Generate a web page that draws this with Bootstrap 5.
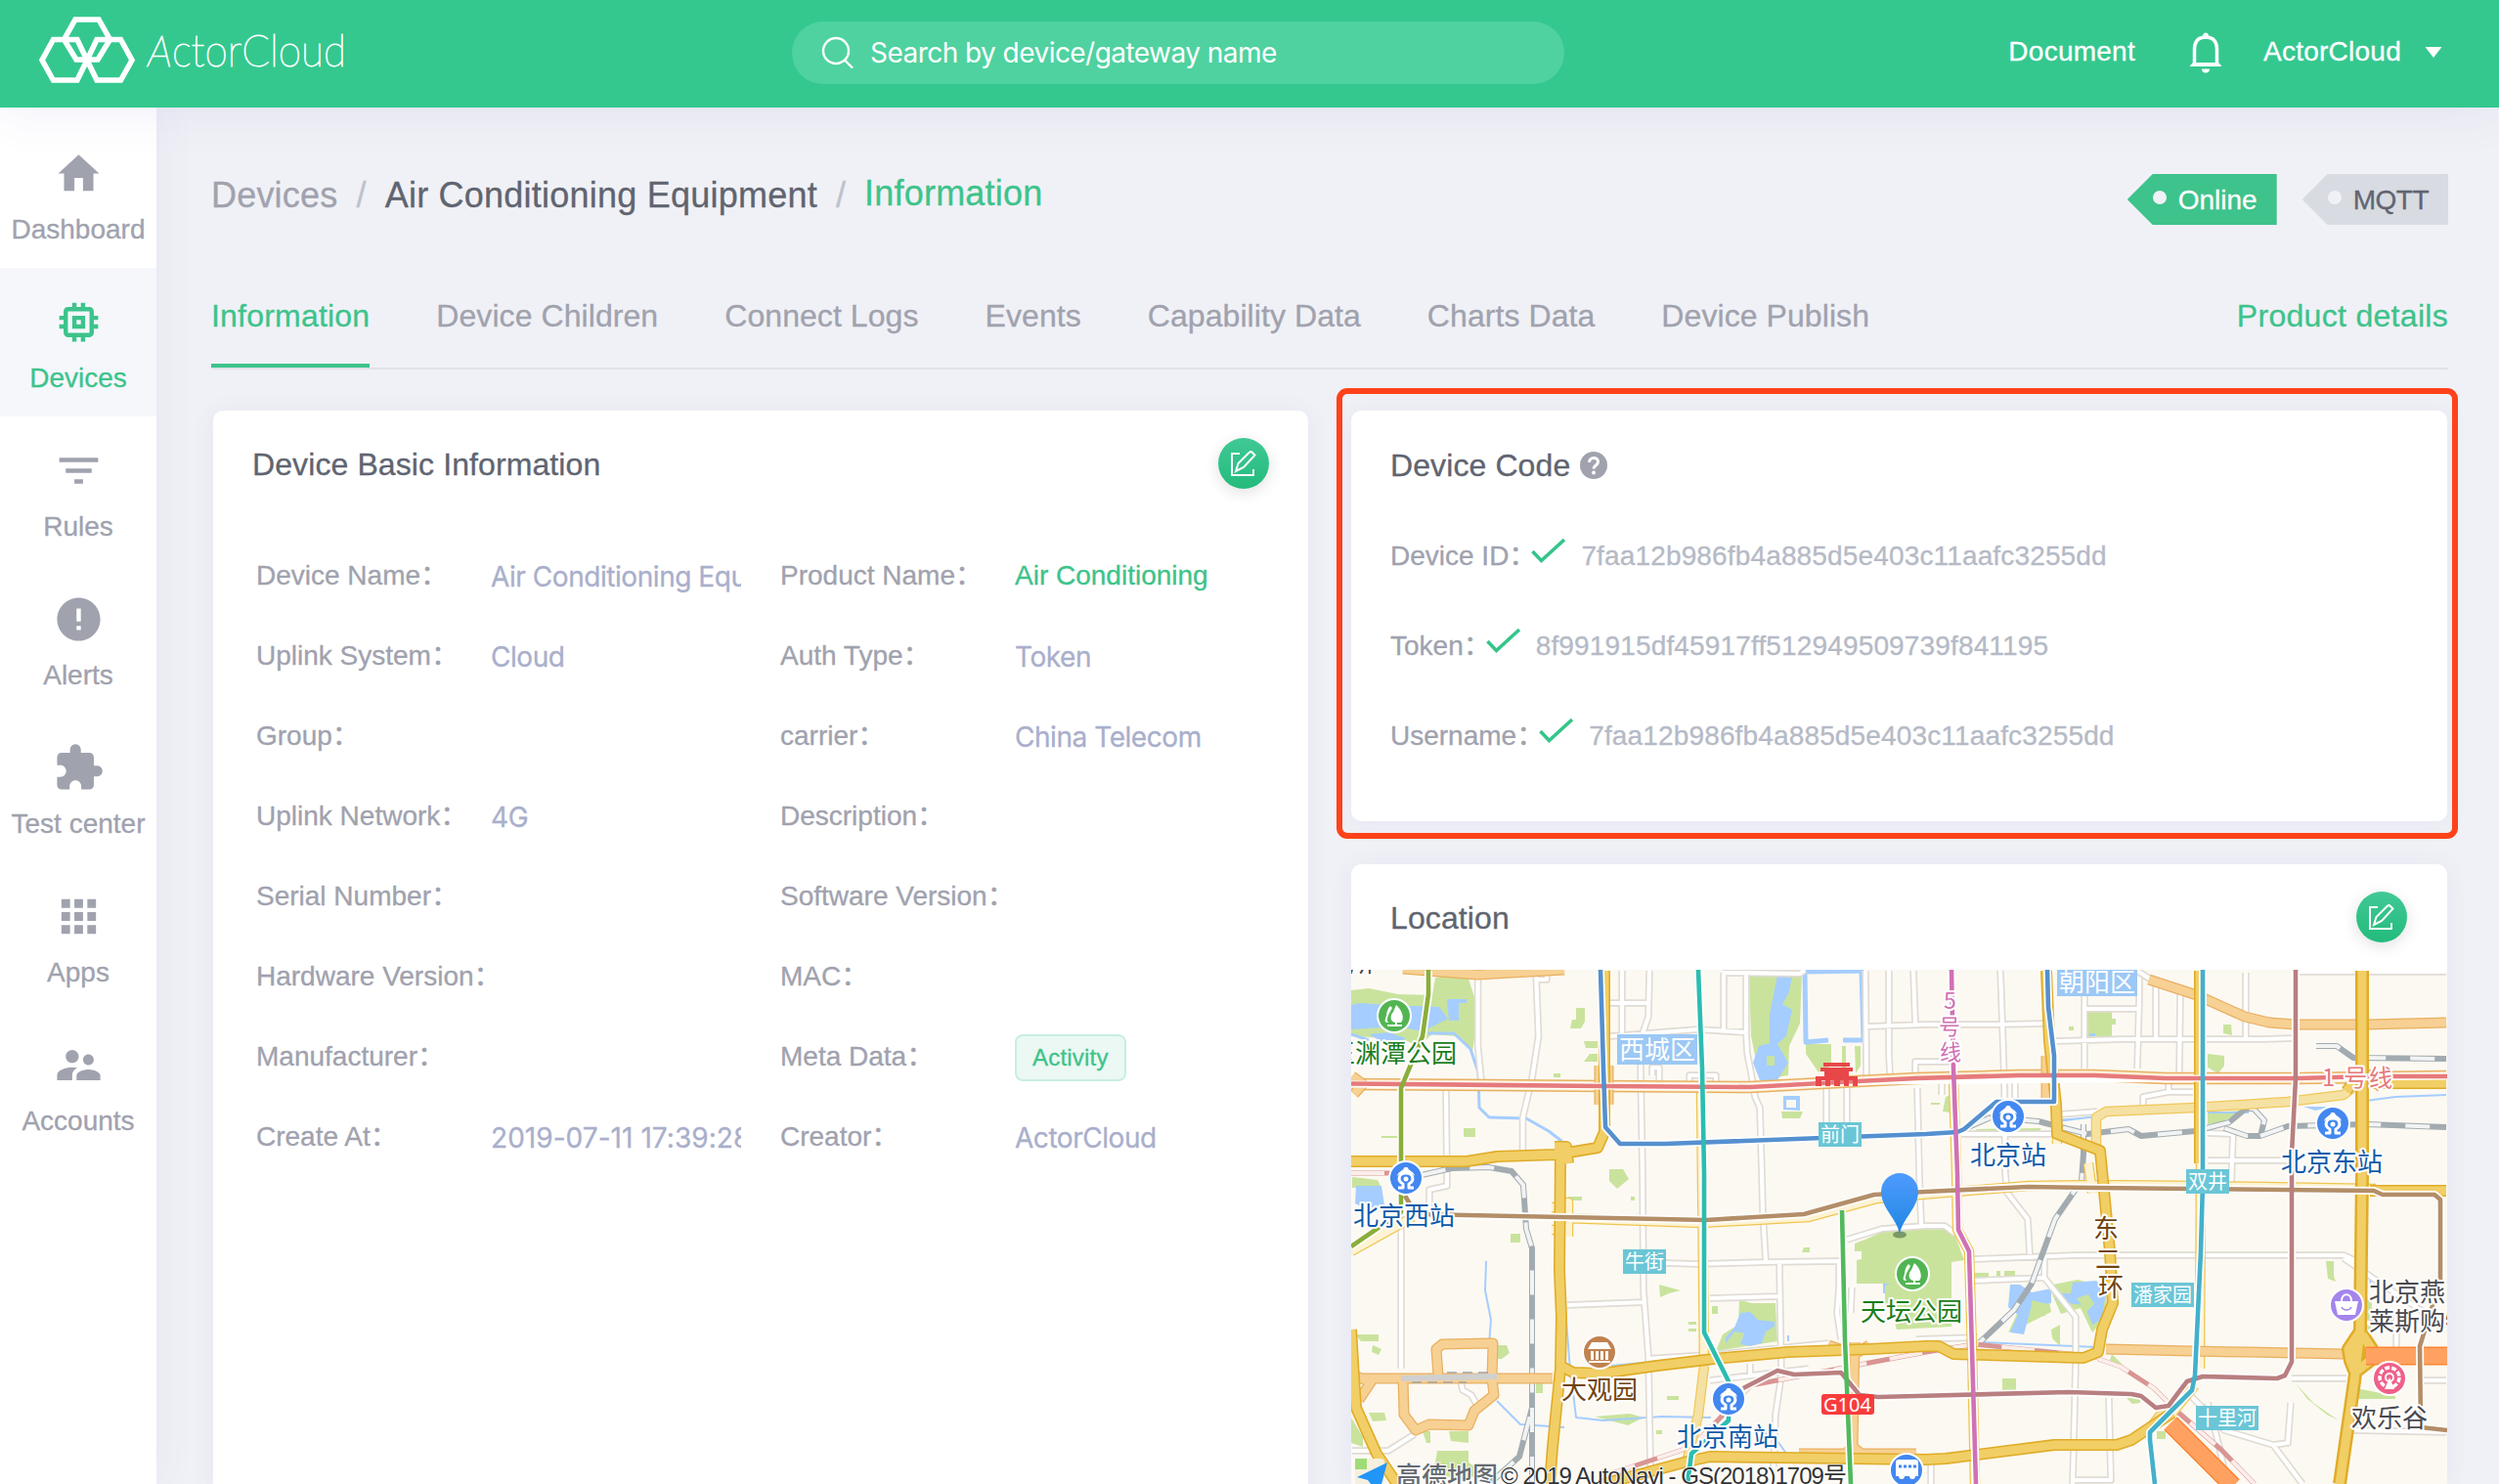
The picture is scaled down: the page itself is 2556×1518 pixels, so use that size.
<!DOCTYPE html>
<html lang="en">
<head>
<meta charset="utf-8">
<title>ActorCloud</title>
<link href="https://cdn.jsdelivr.net/npm/bootstrap@5.3.0/dist/css/bootstrap.min.css" rel="stylesheet">
<style>
body{width:2556px;height:1518px;overflow:hidden;background:#f0f1f6;font:28px/34px "Liberation Sans","Noto Sans CJK SC",sans-serif;color:#a0a2ae;-webkit-text-stroke:.3px}
a{text-decoration:none;color:inherit}
.ac-top{height:110px;background:#34c88f;color:#fff;box-shadow:0 4px 50px rgba(90,80,190,.09);position:relative;z-index:2}
.ac-brand{width:340px;height:80px;margin-left:30px}
.ac-search{width:790px;height:64px;border-radius:32px;background:#4fd2a0;margin-left:440px;padding-left:30px;font-family:Inter,sans-serif;margin-top:-2px;-webkit-text-stroke:0}
.ac-search span{margin-left:16px;letter-spacing:-.54px}
.ac-user{margin-left:auto;padding-right:58px;margin-top:-4px;letter-spacing:.25px}
.ac-bell{margin:2px 42px 0 55px}
.ac-caret{margin-left:24px}
.ac-side{width:160px;height:1408px;background:#fff;padding-top:12px;box-shadow:0 0 40px rgba(90,80,190,.07)}
.ac-side a{height:152px;padding-top:29px;display:flex;flex-direction:column;align-items:center;white-space:nowrap}
.ac-side svg{width:53px;height:53px;fill:currentColor;margin-bottom:14px;flex:none}
.ac-side a.on{background:#f5f7fb;color:#3dc38b}
.ac-main{padding:0 52px 0 56px;height:1408px}
.ac-crumb{height:76px;margin-top:52px;font-size:36px;line-height:44px;padding-top:16px;letter-spacing:.2px}
.ac-crumb i{font-style:normal;color:#bcc2cc;margin:0 19px}
.ac-crumb .ac-last{margin-top:-2px}
.ac-crumb .ac-mid{letter-spacing:.23px}
.ac-dark{color:#606470}
.ac-green{color:#3dc38b}
.ac-tag{height:52px;padding:0 20px 0 52px;line-height:54px;clip-path:polygon(26px 0,100% 0,100% 100%,26px 100%,0 50%);background:#d8dbe2;color:#606470;position:relative;font-size:28px;letter-spacing:-.5px}
.ac-tag::before{content:"";position:absolute;left:26px;top:17px;width:14px;height:14px;border-radius:50%;background:#f0f1f6}
.ac-tag.on{background:#3dc38b;color:#fff;letter-spacing:0}
.ac-tabs{height:90px;margin-top:50px;border-bottom:2px solid #e0e2e8;font-size:32px;line-height:38px;gap:68px;padding-top:16px;white-space:nowrap;letter-spacing:.07px}
.ac-tabs a{height:72px}
.ac-tabs .on{border-bottom:4px solid #3dc38b;color:#3dc38b;letter-spacing:.2px}
.ac-tabs .ac-green{letter-spacing:.3px}
.ac-tabs .on.ac-green{letter-spacing:.2px}
.ac-panel{background:#fff;border-radius:10px;box-shadow:0 2px 24px rgba(90,80,190,.07)}
.ac-title{font-size:32px;line-height:38px;color:#606470;letter-spacing:.1px;padding-top:1px}
.ac-edit{width:52px;height:52px;border-radius:50%;background:linear-gradient(#40c995,#23bb7c);box-shadow:0 4px 16px rgba(0,0,0,.12)}
.ac-row{height:82px}
.ac-row>span{white-space:nowrap;overflow:hidden}
.k1{width:240px}.v1{width:256px}.k2{width:240px;margin-left:40px}
.ac-row .vv{font-family:Inter,"Noto Sans",sans-serif;color:#a9afcb;padding-top:1px;height:40px;letter-spacing:-.45px}
.ac-row .vdate{letter-spacing:.05px}
.ac-chip{border:2px solid #c8efde;background:#ebf8f3;color:#3dc38b;font-size:24px;letter-spacing:.2px;border-radius:8px;height:48px;line-height:44px;padding:0 16px;margin-top:-6px}
.ac-code{height:420px;position:relative;padding:35px 40px}
.ac-code::after{content:"";position:absolute;inset:-23px -11px -18px -15px;border:6px solid #ff421a;border-radius:11px}
.ac-code-head{height:40px;gap:10px;margin-bottom:57px}
.ac-code .ln{height:92px;white-space:nowrap}
.ac-code b{font-weight:400;color:#b5bac6;letter-spacing:.15px}
.ck{margin:-2px 15px 0 -5px;flex:none}
.ac-map{display:block;width:1121px;height:526px;-webkit-text-stroke:0}
.ac-map text{font-family:"Noto Sans CJK SC",sans-serif;font-size:26px}
.ac-map path,.ac-map use{fill:none;stroke-linejoin:round}
.ac-map .halo{paint-order:stroke;stroke:#fff;stroke-width:4px;stroke-linejoin:round;-webkit-text-stroke:4px #fff}
.ac-map .gr{fill:#c9e39d}.ac-map .wa{fill:#a5cdff}.ac-map .wl{stroke:#a5cdff;stroke-width:3}
.ac-map .w{fill:#fff}
.sub{stroke-width:4.6}
</style>
<script src="https://cdn.jsdelivr.net/npm/bootstrap@5.3.0/dist/js/bootstrap.bundle.min.js"></script>
</head>
<body>
<header class="ac-top d-flex align-items-center">
  <svg class="ac-brand" viewBox="30 15 340 80">
    <g fill="none" stroke="#fff" stroke-width="5.600">
      <path d="M77 20h24l11.500 20.500L100 61H78L65.500 40.500z"/>
      <path d="M54.500 40.500h24.500L89 61.500 79 82h-24.500L43 61.500z"/>
      <path d="M99 40.500h24.500L135 61.500 123.500 82H99L89 61.500z"/>
    </g>
    <text x="151" y="68" fill="#fff" font-family="Lato" font-weight="100" font-size="45" textLength="203" lengthAdjust="spacingAndGlyphs" stroke="#fff" stroke-width="1"><tspan font-style="italic">A</tspan>ctorCloud</text>
  </svg>
  <div class="ac-search d-flex align-items-center">
    <svg width="34" height="34" viewBox="0 0 34 34" fill="none" stroke="#fff" stroke-width="2.400"><circle cx="15" cy="15" r="13"/><path d="M24 24.500l8 8"/></svg>
    <span>Search by device/gateway name</span>
  </div>
  <div class="ac-user d-flex align-items-center">
    <a href="#">Document</a>
    <svg class="ac-bell" width="34" height="42" viewBox="0 0 34 42"><path d="M5.500 32V18C5.500 9 10 5 17 5S28.500 9 28.500 18v14" fill="none" stroke="#fff" stroke-width="3.500"/><path d="M14 4a3 3.500 0 016 0v3h-6zM1 35v-1l5-5v2h22v-2l5 5v1zM13 37.500h8a4 4 0 01-8 0z" fill="#fff"/></svg>
    <a href="#">ActorCloud</a>
    <svg class="ac-caret" width="18" height="11" viewBox="0 0 18 11"><path d="M.500 0h17L9 11z" fill="#fff"/></svg>
  </div>
</header>
<div class="d-flex">
<nav class="ac-side flex-shrink-0">
  <a href="#"><svg viewBox="0 0 24 24"><path d="M10 20v-6h4v6h4.800v-8H21.500L12 3.300 2.500 12h2.700v8z"/></svg>Dashboard</a>
  <a href="#" class="on"><svg viewBox="0 0 24 24"><path d="M15 9H9v6h6V9zm-2 4h-2v-2h2v2zm8-2V9h-2V7c0-1.100-.9-2-2-2h-2V3h-2v2h-2V3H9v2H7c-1.100 0-2 .9-2 2v2H3v2h2v2H3v2h2v2c0 1.100.9 2 2 2h2v2h2v-2h2v2h2v-2h2c1.100 0 2-.9 2-2v-2h2v-2h-2v-2h2zm-4 6H7V7h10v10z"/></svg>Devices</a>
  <a href="#"><svg viewBox="0 0 24 24"><path d="M10 18h4v-2h-4v2zM3 6v2h18V6H3zm3 7h12v-2H6v2z"/></svg>Rules</a>
  <a href="#"><svg viewBox="0 0 24 24"><path d="M12 2C6.480 2 2 6.480 2 12s4.480 10 10 10 10-4.480 10-10S17.520 2 12 2zm1 15h-2v-2h2v2zm0-4h-2V7h2v6z"/></svg>Alerts</a>
  <a href="#"><svg viewBox="0 0 24 24"><path d="M20.500 11H19V7c0-1.100-.9-2-2-2h-4V3.500C13 2.120 11.880 1 10.500 1S8 2.120 8 3.500V5H4c-1.100 0-1.990.9-1.990 2v3.800H3.500c1.490 0 2.700 1.210 2.700 2.700s-1.210 2.700-2.700 2.700H2V20c0 1.100.9 2 2 2h3.800v-1.500c0-1.490 1.210-2.700 2.700-2.700 1.490 0 2.700 1.210 2.700 2.700V22H17c1.100 0 2-.9 2-2v-4h1.500c1.380 0 2.500-1.120 2.500-2.500S21.880 11 20.500 11z"/></svg>Test center</a>
  <a href="#"><svg viewBox="0 0 24 24"><path d="M4 8h4V4H4v4zm6 12h4v-4h-4v4zm-6 0h4v-4H4v4zm0-6h4v-4H4v4zm6 0h4v-4h-4v4zm6-10v4h4V4h-4zm-6 4h4V4h-4v4zm6 6h4v-4h-4v4zm0 6h4v-4h-4v4z"/></svg>Apps</a>
  <a href="#"><svg viewBox="0 0 24 24"><path d="M16.500 12c1.380 0 2.490-1.120 2.490-2.500S17.880 7 16.500 7C15.120 7 14 8.120 14 9.500s1.120 2.500 2.500 2.500zM9 11c1.660 0 2.990-1.340 2.990-3S10.660 5 9 5C7.340 5 6 6.340 6 8s1.340 3 3 3zm7.500 3c-1.830 0-5.500.92-5.500 2.750V19h11v-2.250c0-1.830-3.670-2.750-5.500-2.750zM9 13c-2.330 0-7 1.170-7 3.500V19h7v-2.250c0-.85.33-2.340 2.370-3.470C10.500 13.100 9.660 13 9 13z"/></svg>Accounts</a>
</nav>
<main class="ac-main flex-grow-1">
  <div class="ac-crumb d-flex align-items-start">
    <span>Devices</span><i>/</i><span class="ac-dark ac-mid">Air Conditioning Equipment</span><i>/</i><span class="ac-green ac-last">Information</span>
    <div class="d-flex ms-auto" style="gap:26px"><span class="ac-tag on">Online</span><span class="ac-tag">MQTT</span></div>
  </div>
  <div class="ac-tabs d-flex">
    <a href="#" class="on">Information</a><a href="#">Device Children</a><a href="#">Connect Logs</a><a href="#">Events</a><a href="#">Capability Data</a><a href="#">Charts Data</a><a href="#">Device Publish</a>
    <a href="#" class="ac-green ms-auto">Product details</a>
  </div>
  <div class="d-flex align-items-start" style="padding:42px 1px 0 2px;gap:44px">
    <section class="ac-panel flex-shrink-0" style="width:1120px;height:1110px;padding:28px 40px 0">
      <div class="d-flex justify-content-between align-items-center" style="height:52px"><span class="ac-title">Device Basic Information</span>
        <a href="#" class="ac-edit d-flex align-items-center justify-content-center"><svg width="28" height="28" viewBox="0 0 28 28" fill="none" stroke="#fff" stroke-width="2"><path d="M10 4H2v22h22v-6M6 22l2.500-8L20 2.500Q21.500 1.500 23 3l2.500 2.500L14 18z"/></svg></a></div>
      <div style="padding:72px 0 0 4px">
        <div class="ac-row d-flex"><span class="k1">Device Name：</span><span class="v1 vv">Air Conditioning Equipment</span><span class="k2">Product Name：</span><span class="ac-green">Air Conditioning</span></div>
        <div class="ac-row d-flex"><span class="k1">Uplink System：</span><span class="v1 vv">Cloud</span><span class="k2">Auth Type：</span><span class="vv">Token</span></div>
        <div class="ac-row d-flex"><span class="k1">Group：</span><span class="v1 vv"></span><span class="k2">carrier：</span><span class="vv">China Telecom</span></div>
        <div class="ac-row d-flex"><span class="k1">Uplink Network：</span><span class="v1 vv">4G</span><span class="k2">Description：</span></div>
        <div class="ac-row d-flex"><span class="k1">Serial Number：</span><span class="v1 vv"></span><span class="k2">Software Version：</span></div>
        <div class="ac-row d-flex"><span class="k1 overflow-visible">Hardware Version：</span><span class="v1 vv"></span><span class="k2">MAC：</span></div>
        <div class="ac-row d-flex"><span class="k1">Manufacturer：</span><span class="v1 vv"></span><span class="k2">Meta Data：</span><span class="ac-chip">Activity</span></div>
        <div class="ac-row d-flex"><span class="k1">Create At：</span><span class="v1 vv vdate">2019-07-11 17:39:28</span><span class="k2">Creator：</span><span class="vv">ActorCloud</span></div>
      </div>
    </section>
    <div class="d-flex flex-column" style="width:1121px;gap:44px">
      <section class="ac-panel ac-code">
        <div class="d-flex align-items-center ac-title ac-code-head"><span>Device Code</span><svg width="28" height="28" viewBox="0 0 28 28"><circle cx="14" cy="14" r="14" fill="#a0a2ae"/><path d="M9.500 11c0-6 9-6 9-.5 0 3.500-4.500 3.500-4.500 7" fill="none" stroke="#fff" stroke-width="3"/><circle cx="14" cy="21.500" r="2" fill="#fff"/></svg></div>
        <div class="ln d-flex"><span>Device ID：</span><svg class="ck" width="36" height="27" viewBox="0 0 36 27"><path d="M1.500 14l9 9.500L34 2" fill="none" stroke="#34c58a" stroke-width="3.600"/></svg><b>7faa12b986fb4a885d5e403c11aafc3255dd</b></div>
        <div class="ln d-flex"><span>Token：</span><svg class="ck" width="36" height="27" viewBox="0 0 36 27"><path d="M1.500 14l9 9.500L34 2" fill="none" stroke="#34c58a" stroke-width="3.600"/></svg><b>8f991915df45917ff512949509739f841195</b></div>
        <div class="ln d-flex"><span>Username：</span><svg class="ck" width="36" height="27" viewBox="0 0 36 27"><path d="M1.500 14l9 9.500L34 2" fill="none" stroke="#34c58a" stroke-width="3.600"/></svg><b>7faa12b986fb4a885d5e403c11aafc3255dd</b></div>
      </section>
      <section class="ac-panel">
        <div class="d-flex justify-content-between align-items-center" style="height:108px;padding:0 41px 0 40px"><span class="ac-title">Location</span>
          <a href="#" class="ac-edit d-flex align-items-center justify-content-center"><svg width="28" height="28" viewBox="0 0 28 28" fill="none" stroke="#fff" stroke-width="2"><path d="M10 4H2v22h22v-6M6 22l2.500-8L20 2.500Q21.500 1.500 23 3l2.500 2.500L14 18z"/></svg></a></div>
        <svg class="ac-map" viewBox="1382 992 1121 526">
          <defs>
            <linearGradient id="pin" x1="0" y1="0" x2="0" y2="1"><stop offset="0" stop-color="#4f9bff"/><stop offset="1" stop-color="#1f86e0"/></linearGradient>
            <path id="minor" d="M1511.600 993V1070L1515 1105M1571 993L1573.600 1060 1567 1103 1557.500 1143V1178M1571 1002H1582V993M1479 1115L1480 1213 1462 1217V1240M1659 993V1057M1645 1026H1686M1687 993L1686 1040 1679 1060 1678 1093 1680 1200 1681 1320 1686 1387 1688 1500M1647 1060L1737 1053 1785 1056M1763 995V1053M1762 995L1841 996 1846 992M1786 995V1057L1787 1077 1793 1108 1795 1122 1800 1133 1802 1200 1803 1240 1806 1290M1908 993L1909 1100M1910 1050L1970 1048 2040 1048 2091 1047M1932 993V1075L1933 1100M1957 993L1959 1047M1996 1086H1959V1100M1868 1113V1150M1889 1113V1150M1961 1113L1963 1200 1965 1253M1433 1250V1400M1603 1335L1682 1332M1703 1292L1737 1293 1806 1291 1881 1290M1749 1328L1820 1326M1820 1292L1822 1407 1816 1447 1814 1500M1684 1390L1760 1385 1870 1374M1881 1290V1317L1879 1343 1883 1370M1894 1317L1893 1343M1889 1268L1925 1257 1970 1254 1989 1254 2000 1262M1383 1484H1420L1447 1467M1494 1413L1496 1422 1505 1427 1512 1440M1749 1412L1850 1400M2046 993L2048 1047 2050 1107 2051 1200 2053 1220 2074 1247 2076 1283M2132 1017V1093M2132 1032H2186M2188 1000V1022L2186 1093M2186 993L2200 1002M2205 1000V1063M2230 1017L2229 1097M2103 1065L2170 1063 2313 1063 2346 1062M2297 995V1062M2348 994H2502M2061 1107V1127M1986 1107V1120M2105 1140L2145 1137M2192 1135V1122L2218 1117 2218 1108M2218 1117H2243M2258 1159L2284 1160 2282 1215M2006 1160H2100M2258 1187H2343M2019 1288L2123 1284 2397 1284 2410 1290M2397 1287L2480 1343 2500 1352M2019 1310L2091 1307M2091 1287V1307L2123 1347V1393L2120 1518M2120 1514H2159L2157 1430M2344 1410H2400M2241 1428L2275 1463 2325 1478 2355 1518M2325 1478L2340 1476 2343 1435M2258 1435L2270 1480 2278 1518M2405 1463L2502 1465M2451 1345V1378M2420 1353H2450M1960 1370L2023 1368M2479 1412H2502M1975 1490V1518M1728 1108V1100H1755V1115M1690 1100V1092H1697V1105M1790 1395V1410"/>
            <path id="tan" d="M1435 991L1511 997 1600 992M2198 1002L2247 1018 2296 1040 2321 1046 2348 1048 2420 1048 2502 1046M2154 1380L2241 1382 2397 1385M1389 1410H1588M1471 1407L1469 1380 1475 1375 1527 1374 1526 1410 1528 1427 1508 1443 1502 1458 1462 1457 1448 1463 1436 1447 1435 1410M1388 1408L1402 1414 1390 1432M1870 1376L1897 1385 1912 1376M1897 1373L1895 1480 1884 1490M1895 1480L1908 1490M1840 1487H1960M1383 1101L1394 1109 1385 1119M2093 1080V1130M2250 1085V1120M1636 1090V1130M1645 1090V1130"/>
            <path id="hwy" d="M1382 1109L1640 1111 1790 1112 1900 1106 1960 1103 2065 1100 2142 1100 2215 1103 2350 1103 2502 1101"/>
            <path id="thin" d="M1740 1115L1743 1397M1600 1246L1740 1251 1850 1245 1920 1226 1965 1222 2074 1213 2142 1212 2250 1213 2430 1216M1382 1280L1445 1245M1594 1230H1604V1265M1587 1235H1594M1587 1258H1594M1998 1105L2001 1200 2002 1258 2014 1280 2017 1380 2020 1518M2251 1190L2250 1400M2104 1150V1170M2140 1220L2136 1190M2222 1445L2245 1417"/>
            <path id="light" d="M2144 1175V1143L2154 1137 2245 1133 2340 1127 2397 1120 2412 1108M1743 1397L1737 1447 1726 1492M2200 1460L2215 1440"/>
            <path id="trunk" d="M1382 1188H1500L1531 1183 1592 1181 1634 1174 1641 1158V993M1596 1182L1595 1300 1597 1347 1596 1400 1588 1480 1585 1518M1590 1173H1602L1604 1190M1596 1397L1609 1404 1638 1405 1695 1397 1753 1390 1829 1383 1913 1380 1970 1377 1983 1377 1998 1385 2131 1389 2146 1383 2150 1360 2161 1333 2158 1280 2148 1177 2104 1160 2103 1130 2096 1065 2093 993M1382 1360L1385 1410 1387 1440 1408 1487 1429 1518M1640 1518L1726 1495 1749 1490 1970 1493 1990 1492 2101 1478 2165 1478 2180 1473 2222 1445M2250 993V1190M2412 1100L2400 1116M2420 1098L2436 1112M2424 1218H2502M2424 1108H2502"/>
            <path id="ring4" d="M2416 993V1200L2414 1360 2408 1413 2393 1518M2414 1362L2402 1380 2404 1392 2408 1402M2416 1365L2426 1380 2424 1392 2411 1402"/>
            <path id="rail" d="M1454 1202L1485 1195 1523 1194 1546 1198 1558 1212 1561 1257 1567 1277V1440L1554 1490 1523 1518M1567 1440V1518M2013 1153L2036 1143 2085 1147 2135 1160 2177 1155 2190 1162 2245 1157 2280 1148 2297 1134H2305L2316 1146 2312 1162H2298L2275 1154M2312 1162L2340 1152 2420 1150 2502 1153M2369 1070H2390L2407 1082 2502 1083M2131 1150V1180L2129 1208 2102 1247 2078 1313 2060 1340 2025 1373"/>
            <path id="prail" d="M2146 1390L2169 1398 2203 1420 2226 1443 2272 1483 2306 1518M1730 1480L1753 1457 1791 1417 1970 1383 2020 1375 2145 1388M1640 1510L1730 1480M1382 1200H1440"/>
          </defs>
          <rect x="1382" y="992" width="1121" height="526" fill="#fcf9f2"/>
          <path class="gr" d="M1382 1013L1400 1011 1430 1017 1465 1018 1468 1000 1500 995 1508 1020 1509 1057 1506 1075 1490 1060 1465 1058 1450 1070 1435 1063 1382 1060zM1789 997H1843L1841 1047 1830 1070 1829 1100 1800 1105 1791 1060zM1612 1031H1621V1045L1617 1052H1606L1608 1043H1612zM1620 1065H1634V1072H1622zM1626 1078H1634V1086H1620zM1497 1154h12v9h-12zM1589 1098h7v4h-7zM1847 1068H1873V1090L1860 1097 1847 1078zM1884 1070h4v25h-4zM1897 1070h6v20l-5 8zM1822 1137h22l-3 7h-18zM1413 1162h16v2h-16zM1646 1196h14l6 10-12 10-8-8zM1383 1204l26 3 4 8-30 0zM1545 1262h10v9h-10zM1531 1376h10l3 8-8 6h-5zM1386 1365h24v7h-18zM1404 1376l9 4-3 6-7-3zM1697 1314l22 6-12 3-9 4zM1604 1224h14v4h-14zM1668 1224h4v4h-4zM1897 1272L1910 1267 1930 1258 1997 1257 2009 1289 1996 1291V1357L1940 1360 1934 1340 1928 1335V1313L1899 1313V1289L1904 1288V1280H1897zM1779 1330L1792 1333 1816 1333 1818 1372 1755 1382 1762 1365 1778 1355zM1751 1336h6v8h-6zM1727 1352h8v3h-8zM1727 1359h8v3h-8zM1845 1276h6v5h-8zM1400 1445h16l2 8-14 1zM1455 1464h8v12h-4zM1482 1464h20v12l-18-2zM1470 1484h32v12l12 8-12 10-36-6zM1571 1413h7v12h-7zM1631 1449l36-3 14 4-16 8zM1694 1463h6v4h-6zM1705 1428h12v4h-12zM2134 1035h26v7h4v6h-4v13h-26zM2116 1050h5v4h-5zM2274 1048h8l1 11-9-2zM2258 1078l17 2v10l-6 8-11-6zM2258 1138l35-2-20 12-15 2zM2022 1155l66-1-4 4-68 2zM1990 1122l5-2v18l-8-1zM1975 1128h9v2h-9zM2095 1315l30-6 30 8-1 30-14 16-12-25-20 6zM2072 1325l22-5 4 22-30 15-14 6zM2098 1360l9-5v22l-8-8zM2020 1302h14v5h-14zM2042 1300h4v6h-4zM2050 1300h11v6h-11zM2048 1410h14v12h-14zM2160 1385l12 12-6 2-8-8zM2175 1430l14 0 0 5-8 1zM2206 1464h9v8h-9zM2379 1290h8v15l2 6-8-3zM2420 1325l6 8-2 40 12 10-14-5zM2410 1420l40 8v3h-38zM2348 1415l18 20 26 18-12-6-20-16zM1382 1450l12 20 0 10-12-4z"/>
          <path class="wa" d="M1382 1028L1390 1026 1420 1028 1472 1030 1481 1042 1455 1055 1430 1050 1382 1053zM1480 1022h20v4h-8v18h-10zM1400 1058l20-2 18 6-14 10zM1818 998L1833 1000 1829 1017 1823 1027 1833 1033 1827 1060 1818 1068 1829 1087 1818 1105H1800L1793 1087 1799 1070 1810 1067V1037zM1824 1121h17v15l-17-1zM1387 1213h26l3 20-14 6-16-8zM1780 1343L1790 1342 1798 1350 1815 1352V1357L1806 1362 1802 1374 1790 1377 1780 1375 1784 1364 1774 1362 1765 1374V1368L1774 1358zM2056 1314h10l12 8 20-4v15l-20 2-8 30-14-2 8-18-10-8zM2120 1312l24-2 10 10-4 30-10 5-8-20-18-2-12-4 4-6h12zM2137 1057h6v3h-6zM2103 1145l40-3-36 5zM2356 1132l30 0-18 4zM1926 1313h8l-6 2v8h-2zM1828 1366h2v6h-2zM2422 1303l8 4-6 6z"/>
          <path class="gr" d="M1807 1080h8v10h-8zM2078 1330l16 4-2 12-14 2zM2124 1328l12-4 6 10-8 8z"/>
          <rect x="1827" y="1125" width="10" height="8" fill="#fcf9f2"/>
          <path class="wl" d="M1382 1058L1400 1064M1460 1057H1487L1504 1073 1512 1097 1513 1133 1523 1143 1561 1144 1584 1157 1597 1167V1178"/>
          <path stroke="#a5cdff" stroke-width="2" d="M1520 1290L1519 1320 1525 1350 1523 1375M1602 1350L1605 1390 1612 1450 1640 1453 1700 1449 1750 1450M1648 1397L1690 1393M1531 1433L1555 1457 1600 1460M1790 1460L1815 1470 1833 1495M2025 1373L2145 1378M2420 1126L2450 1122 2502 1120M2104 1147L2145 1142M2258 1138H2300"/>
          <path stroke="#a5cdff" stroke-width="5" d="M1870 1064L1847 1066 1846 994 1904 993 1906 1064 1885 1064"/>
          <use href="#minor" stroke="#e0dbd4" stroke-width="7.500"/><use href="#minor" stroke="#fff" stroke-width="4.200"/>
          <use href="#rail" stroke="#a2abb0" stroke-width="6"/><use href="#rail" stroke="#f2f3f3" stroke-width="4" stroke-dasharray="25 25"/>
          <use href="#prail" stroke="#d89593" stroke-width="5"/><use href="#prail" stroke="#fbeeea" stroke-width="4" stroke-dasharray="34 24"/>
          <use href="#thin" stroke="#efc550" stroke-width="10.500"/><use href="#thin" stroke="#fdf3d4" stroke-width="8"/>
          <use href="#hwy" stroke="#e8b060" stroke-width="12.500"/><use href="#hwy" stroke="#fdf0d8" stroke-width="9.500"/>
          <use href="#tan" stroke="#e8b060" stroke-width="11"/><use href="#tan" stroke="#f7d093" stroke-width="8.500"/>
          <use href="#light" stroke="#f0c85a" stroke-width="10.500"/><use href="#light" stroke="#f5e1a3" stroke-width="8"/>
          <use href="#trunk" stroke="#e0ac28" stroke-width="12"/><use href="#trunk" stroke="#f1cf66" stroke-width="8.800"/>
          <use href="#ring4" stroke="#e0ac28" stroke-width="14"/><use href="#ring4" stroke="#f1cf66" stroke-width="9"/>
          <path stroke="#fb8534" stroke-width="19" d="M2420 1387H2503M2220 1456L2284 1520"/><path stroke="#ffa261" stroke-width="16" d="M2420 1387H2503M2220 1456L2284 1520"/>
          <path stroke="#d0d0d0" stroke-width="6" d="M1433 1410L1531 1408"/><path stroke="#a2a2a2" stroke-width="1.500" stroke-dasharray="10 6" d="M1444 1414H1500M1480 1404H1525"/>
          <g id="lines">
            <path stroke="#fff" stroke-width="8" d="M1461 993V1017L1455 1060 1433 1113V1240L1382 1275M1637 993L1640 1093 1642 1153 1657 1170H1703L1970 1160 2002 1158 2009 1155 2042 1127H2101V1080L2095 1030 2094 993M1737 993L1741 1093 1743 1200V1363L1768 1413V1453L1730 1487 1726 1518M1996 993L1998 1093 2002 1200 2003 1258 2014 1280 2017 1380 2021 1518M2253 993V1210L2251 1280 2245 1407 2242 1422 2199 1465V1473L2204 1518M2348 993V1103L2344 1180V1393L2337 1407 2329 1410 2253 1408 2237 1413 2230 1422 2218 1438 2205 1440 2190 1428 2180 1426 2116 1424 1960 1428 1921 1429 1902 1427 1883 1404 1835 1406 1818 1402 1783 1420M1437 1223L1448 1242 1699 1247 1745 1248 1845 1242 1917 1222 1970 1219 2074 1214 2142 1215 2428 1218 2437 1222H2490L2496 1227V1310L2475 1377 2476 1460 2502 1463M1884 1238L1887 1370 1893 1518"/>
            <path stroke="#fff" stroke-width="7" d="M1382 1109L1640 1111 1790 1112 1900 1106 2502 1101"/>
            <path class="sub" stroke="#e67a7c" d="M1382 1108.500L1640 1111 1790 1112 1900 1106 1960 1103 2065 1100 2142 1100 2215 1103 2350 1103 2425 1101H2503"/>
            <path class="sub" stroke="#b38e68" d="M1437 1223L1448 1242 1699 1247 1745 1248 1845 1242 1917 1222 1970 1219 2074 1214 2142 1215 2428 1218 2437 1222H2490L2496 1227V1310L2475 1377 2476 1460 2503 1463"/>
            <path class="sub" stroke="#8aae3a" d="M1461 992V1017L1455 1060 1433 1113V1240L1382 1275"/>
            <path class="sub" stroke="#5590cf" d="M1637 992L1640 1093 1642 1153 1657 1170H1703L1970 1160 2002 1158 2009 1155 2042 1127H2101V1080L2095 1030 2094 992"/>
            <path class="sub" stroke="#2bbdb0" d="M1737 992L1741 1093 1743 1200V1363L1768 1413V1453L1730 1487 1726 1518"/>
            <path class="sub" stroke="#b97f80" d="M2348 992V1103L2344 1180V1393L2337 1407 2329 1410 2253 1408 2237 1413 2230 1422 2218 1438 2205 1440 2190 1428 2180 1426 2116 1424 1960 1428 1921 1429 1902 1427 1883 1404 1835 1406 1818 1402 1783 1420"/>
            <path class="sub" stroke="#cf72b4" d="M1996 992L1998 1093 2002 1200 2003 1258 2014 1280 2017 1380 2021 1518"/>
            <path class="sub" stroke="#44b0ca" d="M2253 992V1210L2251 1280 2245 1407 2242 1422 2199 1465V1473L2204 1518"/>
            <path class="sub" stroke="#52b95c" d="M1884 1238L1887 1370 1893 1518"/>
          </g>
          <g><rect x="1654" y="1058" width="82" height="31" fill="#9cc8f5"/><rect x="2104" y="988" width="82" height="31" fill="#9cc8f5"/>
          <text class="w" x="1656" y="1083">西城区</text><text class="w" x="2106" y="1014">朝阳区</text></g>
          <g fill="#6ac6d6"><rect x="1860" y="1148" width="44" height="25"/><rect x="1660" y="1278" width="44" height="25"/><rect x="2236" y="1196" width="44" height="25"/><rect x="2180" y="1312" width="64" height="25"/><rect x="2246" y="1438" width="64" height="25"/></g>
          <g fill="#fff"><text style="font-size:20px" x="1862" y="1168">前门</text><text style="font-size:20px" x="1662" y="1298">牛街</text><text style="font-size:20px" x="2238" y="1216">双井</text><text style="font-size:20px" x="2182" y="1332">潘家园</text><text style="font-size:20px" x="2248" y="1458">十里河</text></g>
          <g transform="translate(1857 1087)" fill="#e8474a"><rect x="8" y="0" width="27" height="4"/><rect x="5" y="5" width="33" height="4"/><rect x="9" y="8" width="25" height="6"/><path style="fill:#e8474a" d="M0 14h43v10h-5v-6h-4v6h-5v-6h-4v6h-6v-6h-4v6h-5v-6H6v6H0z"/></g>
          <g id="pois" stroke="#fff" stroke-width="2">
            <circle cx="1426" cy="1039" r="17" fill="#52b552"/><circle cx="1956" cy="1303" r="17" fill="#52b552"/>
            <circle cx="1438" cy="1205" r="17" fill="#4387f0"/><circle cx="2054" cy="1142" r="17" fill="#4387f0"/><circle cx="2386" cy="1149" r="17" fill="#4387f0"/><circle cx="1768" cy="1431" r="17" fill="#4387f0"/><circle cx="1950" cy="1504" r="17" fill="#4387f0"/>
            <circle cx="1636" cy="1383" r="17" fill="#c0824f"/><circle cx="2400" cy="1335" r="17" fill="#a485ec"/><circle cx="2444" cy="1410" r="17" fill="#f0608a"/>
          </g>
          <defs><g id="tree"><path style="fill:#fff" d="M2-11c6 5 9 14 5 18H3v2h5v2H-7V9h8V7c-6-1-5-8-2-11zM-4-10c-5 6-3 9-5 13-1 3 0 4 3 4-3-4 1-9 4-15z"/></g>
          <g id="stn"><path style="stroke:#fff;stroke-width:3" d="M-8 9h5v-4c-6-3-5-11 3-11s9 8 3 11v4h5"/><path style="fill:#fff" d="M-9-3C-8-8-3-8-1.500-12h3C3-8 8-8 9-3 4-8-4-8-9-3z"/><circle cy="0" r="2.500" fill="#fff"/></g></defs>
          <use href="#tree" x="1426" y="1039"/><use href="#tree" x="1956" y="1303"/>
          <use href="#stn" x="1438" y="1206"/><use href="#stn" x="2054" y="1143"/><use href="#stn" x="2386" y="1150"/><use href="#stn" x="1768" y="1432"/>
          <path style="fill:#fff" d="M1628 1373h16l4 7h-24zM1627 1382h3v9h-3zM1632 1382h3v9h-3zM1637 1382h3v9h-3zM1642 1382h3v9h-3zM1625 1392h22v2h-22z"/>
          <path style="fill:#fff" d="M2388 1331h24l-3 14h-18z"/><path style="stroke:#fff;stroke-width:2" d="M2395 1331c0-9 10-9 10 0"/><path style="stroke:#a485ec;stroke-width:1.500" d="M2395 1337c2 4 8 4 10 0"/>
          <circle cx="2444" cy="1409" r="10" fill="none" stroke="#fff" stroke-width="3.500" stroke-dasharray="5 2"/><circle cx="2444" cy="1409" r="4" fill="none" stroke="#fff" stroke-width="2"/><path style="fill:#fff" d="M2444 1409l5 12h-10z"/>
          <path style="fill:#fff" d="M1939 1496q0-3 3-3h17q3 0 3 3v14h-3a3 3 0 01-6 0h-5a3 3 0 01-6 0h-3z"/><path style="stroke:#4387f0;stroke-width:3" stroke-dasharray="3 2" d="M1942 1500h18"/>
          <g fill="#0f5aa8"><text class="halo" x="1384" y="1253">北京西站</text><text class="halo" x="2015" y="1191">北京站</text><text class="halo" x="2333" y="1198">北京东站</text><text class="halo" x="1715" y="1479">北京南站</text></g>
          <g fill="#1b7d1b"><text class="halo" x="1360" y="1087">玉渊潭公园</text><text class="halo" x="1903" y="1351">天坛公园</text></g>
          <g fill="#70430f"><text class="halo" x="1597" y="1431">大观园</text><text class="halo" x="2141" y="1266">东</text><text class="halo" x="2143" y="1297">二</text><text class="halo" x="2146" y="1326">环</text></g>
          <g fill="#cf72b4"><text class="halo" style="font-size:23px" x="1988" y="1032">5</text><text class="halo" style="font-size:22px" x="1983" y="1058">号</text><text class="halo" style="font-size:22px" x="1984" y="1084">线</text></g>
          <text class="halo" style="font-size:24px" fill="#e67a7c" x="2375" y="1111" textLength="72">1 号线</text>
          <g fill="#4a4a4f"><text class="halo" x="2423" y="1331">北京燕</text><text class="halo" x="2423" y="1361">莱斯购物</text><text class="halo" x="2405" y="1460">欢乐谷</text><text class="halo" x="1380" y="994">所</text></g>
          <rect x="1863" y="1426" width="54" height="21" rx="3" fill="#f83c3c"/><text class="w" style="font:20px 'Noto Sans'" x="1865" y="1444">G104</text>
          <ellipse cx="1943" cy="1263" rx="7" ry="3.500" fill="#5a7a50" opacity=".7"/>
          <path style="fill:url(#pin)" d="M1943 1263C1941 1247 1924 1236 1924 1219a19 19 0 0138 0C1962 1236 1945 1247 1943 1263z"/>
          <rect x="1386" y="1492" width="30" height="30" rx="4" fill="#f5efdf"/><path style="fill:#9fdc78" d="M1386 1492h12v11h-12z"/><path style="fill:#2196f8" d="M1419 1496L1388 1511 1399 1514 1402 1518H1413z"/>
          <text style="font-weight:500;paint-order:stroke;stroke:#fff;stroke-width:2px" fill="#666b70" x="1428" y="1519">高德地图</text>
          <text style="font-family:'Liberation Sans','Noto Sans CJK SC';font-size:24px;paint-order:stroke;stroke:#fff;stroke-width:1.500px" fill="#333" x="1535" y="1518" textLength="354">© 2019 AutoNavi - GS(2018)1709号</text>
        </svg>
      </section>
    </div>
  </div>
</main>
</div>
</body>
</html>
